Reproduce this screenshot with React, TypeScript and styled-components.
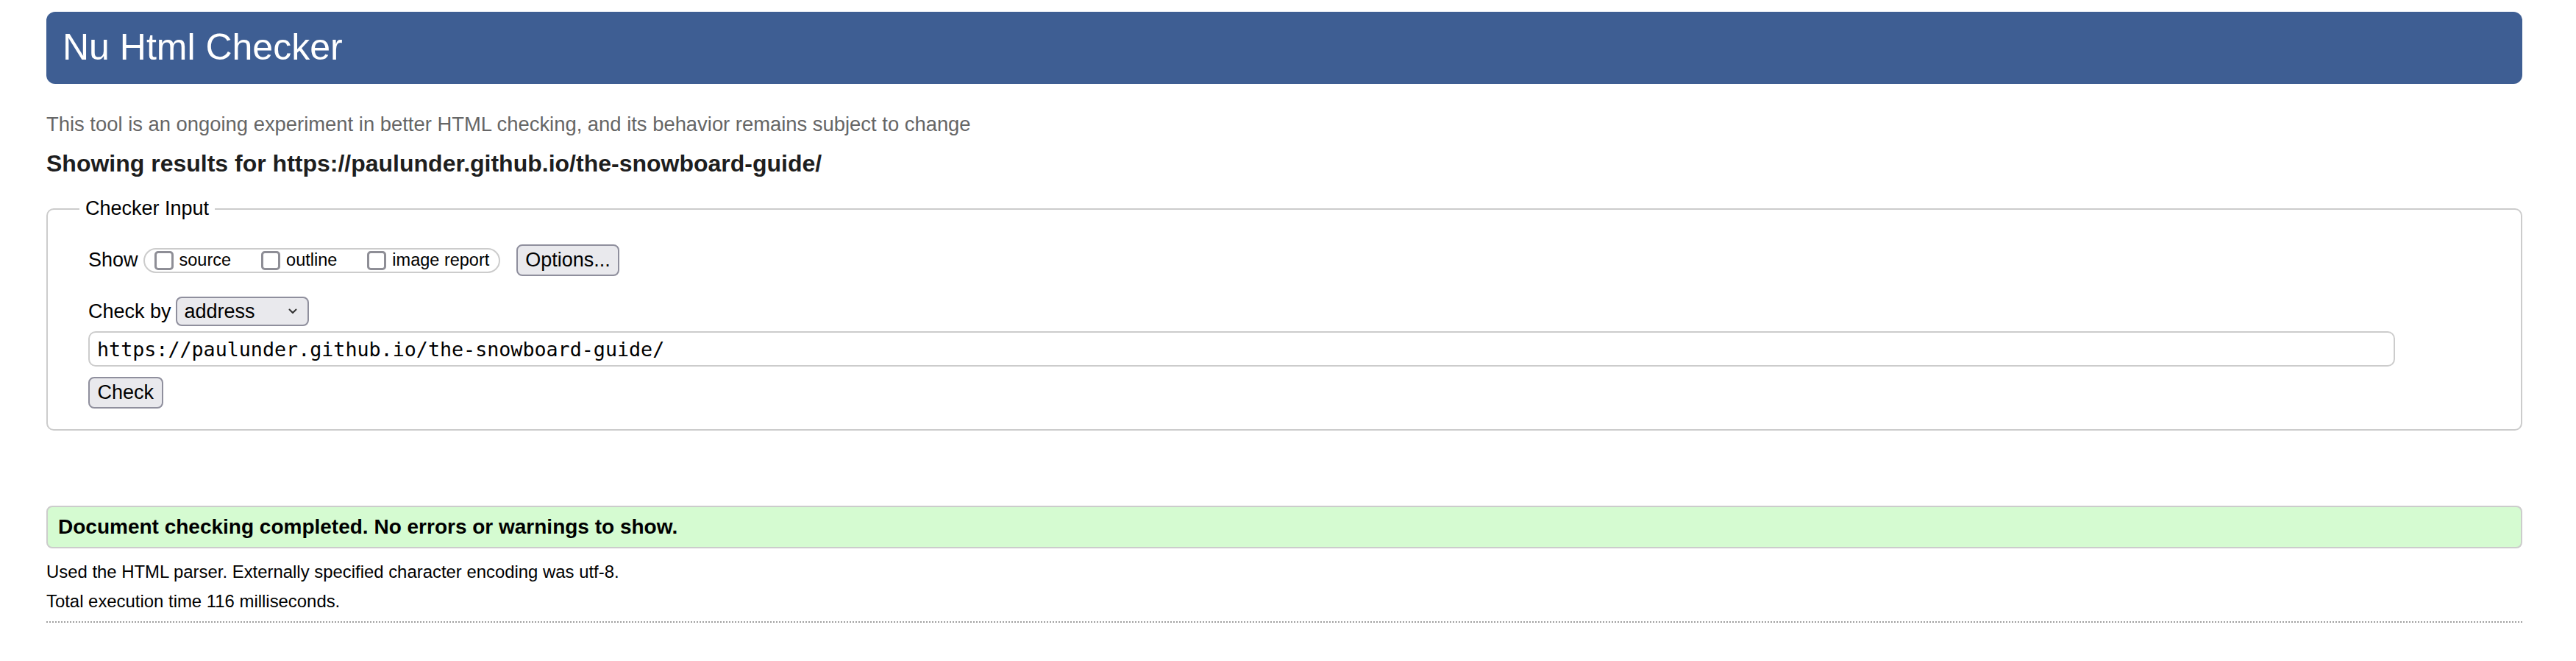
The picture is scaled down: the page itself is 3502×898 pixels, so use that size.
import React from "react";
import styled, { createGlobalStyle } from "styled-components";

const GlobalStyle = createGlobalStyle`
  html, body { margin: 0; padding: 0; background: #ffffff; }
  body {
    font-family: "Liberation Sans", Arial, Helvetica, sans-serif;
    color: #000000;
  }
  * { box-sizing: border-box; }
`;

const Page = styled.div`
  display: flex;
  flex-direction: column;
  padding: 16px 73px 40px 63px;
`;

const Header = styled.h1`
  margin: 0;
  height: 98px;
  padding: 0 22px 2px;
  display: flex;
  align-items: center;
  background: #3e5e93;
  border-radius: 12px;
  color: #ffffff;
  font-size: 50px;
  font-weight: normal;
  line-height: 56px;
`;

const Intro = styled.p`
  margin: 39px 0 0;
  font-size: 27.4px;
  line-height: 31px;
  color: #666666;
`;

const ResultsTitle = styled.h2`
  margin: 20px 0 0;
  font-size: 32px;
  line-height: 37px;
  font-weight: bold;
  color: #1e1e1e;
`;

const Fieldset = styled.fieldset`
  margin: 27px 0 0;
  padding: 33px 0 28px 55px;
  border: 2px solid #cccccc;
  border-radius: 10px;
  min-width: 0;
  display: flex;
  flex-direction: column;
  align-items: flex-start;
`;

const Legend = styled.legend`
  margin-left: -12px;
  padding: 0 8px;
  font-size: 27px;
  line-height: 31px;
`;

const Row = styled.div<{ $top?: number; $height: number }>`
  display: flex;
  align-items: center;
  height: ${(p) => p.$height}px;
  margin-top: ${(p) => p.$top ?? 0}px;
`;

const Label = styled.span<{ $gap?: number }>`
  font-size: 27px;
  line-height: 31px;
  margin-right: ${(p) => p.$gap ?? 0}px;
`;

const Pill = styled.div`
  display: flex;
  align-items: center;
  gap: 41px;
  height: 34px;
  padding: 0 13px;
  border: 2px solid #cccccc;
  border-radius: 17px;
`;

const CheckItem = styled.label`
  display: flex;
  align-items: center;
  gap: 8px;
  font-size: 23.5px;
  line-height: 27px;
`;

const Box = styled.span`
  display: inline-block;
  width: 26px;
  height: 26px;
  border: 3px solid #8e8e96;
  border-radius: 5px;
  background: #ffffff;
`;

const Button = styled.button<{ $left?: number }>`
  height: 43px;
  margin-left: ${(p) => p.$left ?? 0}px;
  padding: 0 10px;
  font-family: "Liberation Sans", Arial, Helvetica, sans-serif;
  font-size: 27px;
  color: #000000;
  background: #e9e9ed;
  border: 2px solid #8f8f9d;
  border-radius: 8px;
`;

const SelectBox = styled.div`
  display: flex;
  align-items: center;
  justify-content: space-between;
  width: 181px;
  height: 40px;
  padding: 0 14px 0 10px;
  font-size: 27px;
  background: #e9e9ed;
  border: 2px solid #8f8f9d;
  border-radius: 8px;
`;

const UrlField = styled.div`
  display: flex;
  align-items: center;
  width: 3136px;
  height: 48px;
  margin-top: 7px;
  padding: 0 10px;
  border: 2px solid #cccccc;
  border-radius: 10px;
  font-family: "DejaVu Sans Mono", "Liberation Mono", monospace;
  font-size: 26.7px;
  color: #000000;
`;

const CheckButton = styled(Button)`
  margin-top: 14px;
  padding: 0 10.5px;
`;

const Success = styled.div`
  display: flex;
  align-items: center;
  height: 58px;
  margin-top: 102px;
  padding: 0 14px;
  background: #d5fbd1;
  border: 2px solid #cccccc;
  border-radius: 8px;
  font-size: 28px;
  font-weight: bold;
  color: #000000;
`;

const Note = styled.p<{ $top: number }>`
  margin: ${(p) => p.$top}px 0 0;
  font-size: 23.9px;
  line-height: 27px;
  color: #000000;
`;

const Dotted = styled.hr`
  margin: 14px 0 0;
  height: 0;
  border: none;
  border-top: 2px dotted #a0a0a0;
`;

const Chevron = () => (
  <svg width="12" height="8" viewBox="0 0 12 8" fill="none">
    <path d="M1.5 1.5 L6 6 L10.5 1.5" stroke="#333" strokeWidth="2" strokeLinecap="round" strokeLinejoin="round" />
  </svg>
);

export default function App() {
  return (
    <>
      <GlobalStyle />
      <Page>
        <Header>Nu Html Checker</Header>
        <Intro>
          This tool is an ongoing experiment in better HTML checking, and its behavior remains subject to change
        </Intro>
        <ResultsTitle>Showing results for https://paulunder.github.io/the-snowboard-guide/</ResultsTitle>
        <Fieldset>
          <Legend>Checker Input</Legend>
          <Row $height={43}>
            <Label $gap={7}>Show</Label>
            <Pill>
              <CheckItem>
                <Box />
                source
              </CheckItem>
              <CheckItem>
                <Box />
                outline
              </CheckItem>
              <CheckItem>
                <Box />
                image report
              </CheckItem>
            </Pill>
            <Button $left={22}>Options...</Button>
          </Row>
          <Row $top={28} $height={40}>
            <Label $gap={6}>Check by</Label>
            <SelectBox>
              <span>address</span>
              <Chevron />
            </SelectBox>
          </Row>
          <UrlField>https://paulunder.github.io/the-snowboard-guide/</UrlField>
          <CheckButton>Check</CheckButton>
        </Fieldset>
        <Success>Document checking completed. No errors or warnings to show.</Success>
        <Note $top={18}>Used the HTML parser. Externally specified character encoding was utf-8.</Note>
        <Note $top={13}>Total execution time 116 milliseconds.</Note>
        <Dotted />
      </Page>
    </>
  );
}
